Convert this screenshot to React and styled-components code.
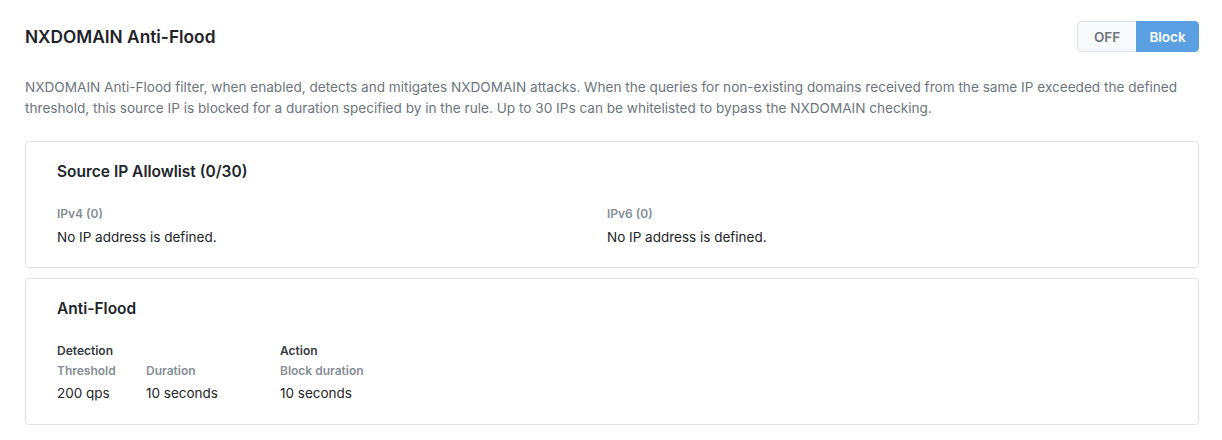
import React from "react";
import styled, { createGlobalStyle } from "styled-components";

const Global = createGlobalStyle`
  body {
    margin: 0;
    background: #ffffff;
    font-family: Inter, "Noto Sans", sans-serif;
    color: #212529;
  }
`;

const Page = styled.div`
  padding: 21px 23px 16px 25px;
`;

const Header = styled.div`
  display: flex;
  align-items: center;
  justify-content: space-between;
`;

const Title = styled.h2`
  margin: 0;
  font-size: 17.3px;
  font-weight: 600;
  color: #1f2329;
`;

const Toggle = styled.div`
  display: flex;
  height: 31px;
  border-radius: 4px;
  overflow: hidden;
`;

const ToggleButton = styled.button`
  border: 1px solid ${(p) => (p.$active ? "#5b9fe3" : "#dee2e6")};
  background: ${(p) => (p.$active ? "#5b9fe3" : "#f8f9fa")};
  color: ${(p) => (p.$active ? "#ffffff" : "#6c757d")};
  font-family: inherit;
  font-size: 13.5px;
  font-weight: 600;
  padding: 0;
  width: ${(p) => p.$w}px;
  cursor: pointer;
  &:first-child {
    border-radius: 4px 0 0 4px;
    border-right: none;
  }
  &:last-child {
    border-radius: 0 4px 4px 0;
  }
`;

const Description = styled.p`
  margin: 25px 0 22px;
  font-size: 13.6px;
  line-height: 21px;
  color: #6c757d;
`;

const Card = styled.section`
  border: 1px solid #dee2e6;
  border-radius: 4px;
  padding: 20px 31px 20.5px;
  & + & {
    margin-top: 9.5px;
  }
`;

const CardTitle = styled.h3`
  margin: 0 0 25px;
  font-size: 15.5px;
  font-weight: 600;
  color: #212529;
`;

const IpGrid = styled.div`
  display: grid;
  grid-template-columns: 550px 1fr;
`;

const Label = styled.div`
  font-size: 12px;
  font-weight: 600;
  line-height: 16px;
  color: #868e96;
`;

const Value = styled.div`
  font-size: 13.5px;
  line-height: 20px;
  margin-top: 4.5px;
  color: #212529;
`;

const Groups = styled.div`
  display: flex;
`;

const Group = styled.div`
  width: ${(p) => (p.$w ? `${p.$w}px` : "auto")};
`;

const GroupTitle = styled.div`
  font-size: 12px;
  font-weight: 600;
  line-height: 15px;
  color: #343a40;
  margin-bottom: 5px;
`;

const Fields = styled.div`
  display: flex;
`;

const Field = styled.div`
  width: ${(p) => (p.$w ? `${p.$w}px` : "auto")};
`;

export default function App() {
  return (
    <Page>
      <Global />
      <Header>
        <Title>NXDOMAIN Anti-Flood</Title>
        <Toggle>
          <ToggleButton $w={59}>OFF</ToggleButton>
          <ToggleButton $w={63} $active>Block</ToggleButton>
        </Toggle>
      </Header>
      <Description>
        NXDOMAIN Anti-Flood filter, when enabled, detects and mitigates NXDOMAIN attacks. When the queries for non-existing domains received from the same IP exceeded the defined threshold, this source IP is blocked for a duration specified by in the rule. Up to 30 IPs can be whitelisted to bypass the NXDOMAIN checking.
      </Description>

      <Card>
        <CardTitle>Source IP Allowlist (0/30)</CardTitle>
        <IpGrid>
          <div>
            <Label>IPv4 (0)</Label>
            <Value>No IP address is defined.</Value>
          </div>
          <div>
            <Label>IPv6 (0)</Label>
            <Value>No IP address is defined.</Value>
          </div>
        </IpGrid>
      </Card>

      <Card>
        <CardTitle>Anti-Flood</CardTitle>
        <Groups>
          <Group $w={223}>
            <GroupTitle>Detection</GroupTitle>
            <Fields>
              <Field $w={89}>
                <Label>Threshold</Label>
                <Value>200 qps</Value>
              </Field>
              <Field>
                <Label>Duration</Label>
                <Value>10 seconds</Value>
              </Field>
            </Fields>
          </Group>
          <Group>
            <GroupTitle>Action</GroupTitle>
            <Field>
              <Label>Block duration</Label>
              <Value>10 seconds</Value>
            </Field>
          </Group>
        </Groups>
      </Card>
    </Page>
  );
}
